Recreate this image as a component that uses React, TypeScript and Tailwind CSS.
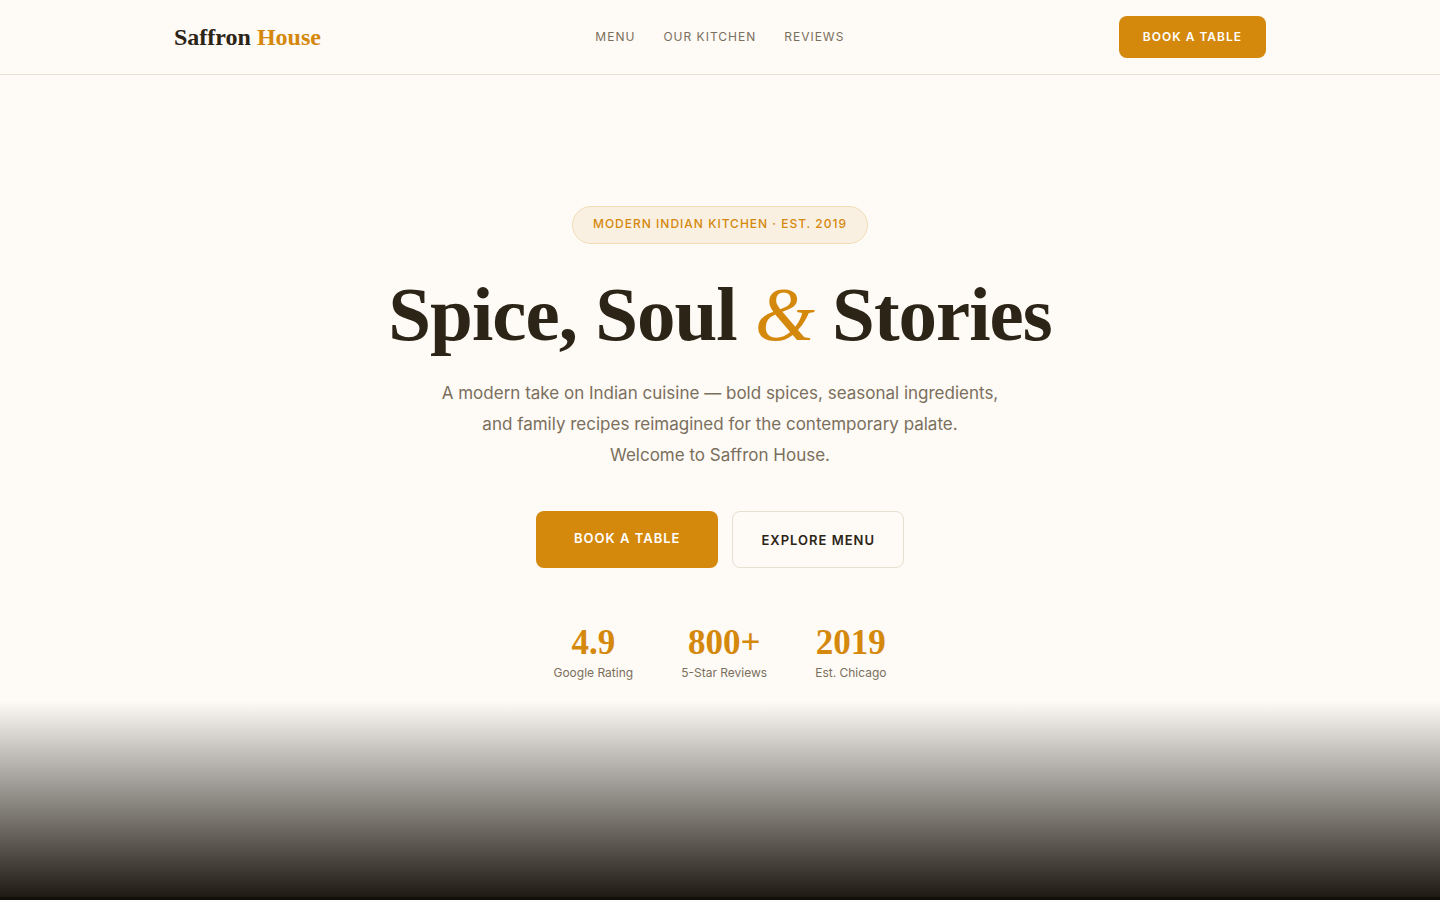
import React from "react";

type Stat = {
  value: string;
  label: string;
};

const navLinks = [
  { label: "Menu", href: "#menu" },
  { label: "Our Kitchen", href: "#kitchen" },
  { label: "Reviews", href: "#reviews" },
];

const stats: Stat[] = [
  { value: "4.9", label: "Google Rating" },
  { value: "800+", label: "5-Star Reviews" },
  { value: "2019", label: "Est. Chicago" },
];

const Header = () => (
  <header className="border-b border-[#e5e0d0]">
    <div className="mx-auto flex max-w-[1140px] items-center justify-between px-6 py-4">
      <a href="#top" className="font-['Liberation_Serif',serif] text-2xl leading-8 font-bold">
        Saffron <span className="text-[#d4880c]">House</span>
      </a>
      <nav className="flex gap-7 text-xs leading-5 tracking-[1px] text-[#7a6f5d] uppercase">
        {navLinks.map((link) => (
          <a key={link.href} href={link.href}>
            {link.label}
          </a>
        ))}
      </nav>
      <button
        type="button"
        className="rounded-lg bg-[#d4880c] px-6 py-[11px] text-xs leading-5 font-semibold tracking-[1px] text-white uppercase"
      >
        Book a Table
      </button>
    </div>
  </header>
);

const StatItem = ({ value, label }: Stat) => (
  <div className="text-center">
    <div className="font-['Liberation_Serif',serif] text-[35px] leading-10 font-bold text-[#d4880c]">{value}</div>
    <div className="text-xs leading-5 text-[#7a6f5d]">{label}</div>
  </div>
);

const Hero = () => (
  <section className="flex flex-col items-center px-6 pt-[131px] text-center">
    <div className="rounded-full border border-[#f1dcb5] bg-[#faf0e2] px-5 pt-2 pb-[10px] text-xs leading-[18px] font-medium tracking-[1px] text-[#d4880c] uppercase">
      Modern Indian Kitchen · Est. 2019
    </div>
    <h1 className="mt-7 font-['Liberation_Serif',serif] text-[77px] leading-[84px] font-bold tracking-[-1px]">
      Spice, Soul <em className="font-normal text-[#d4880c]">&amp;</em> Stories
    </h1>
    <p className="mt-[22px] max-w-[600px] text-[17px] leading-[31px] text-[#7a6f5d]">
      A modern take on Indian cuisine — bold spices, seasonal ingredients,
      <br />
      and family recipes reimagined for the contemporary palate.
      <br />
      Welcome to Saffron House.
    </p>
    <div className="mt-10 flex gap-[14px] text-[13px] leading-6 font-semibold">
      <button
        type="button"
        className="rounded-lg bg-[#d4880c] px-[38px] pt-[15px] pb-[18px] tracking-[1px] text-white uppercase"
      >
        Book a Table
      </button>
      <button type="button" className="rounded-lg border border-[#e5e0d0] px-7 py-[15px] tracking-[1px] uppercase">
        Explore Menu
      </button>
    </div>
    <div className="mt-[55px] flex gap-12">
      {stats.map((stat) => (
        <StatItem key={stat.label} {...stat} />
      ))}
    </div>
  </section>
);

const App = () => (
  <div id="top" className="min-h-screen bg-[#fefaf5] font-[Inter,sans-serif] text-[#2c2416]">
    <Header />
    <main>
      <Hero />
      <div className="mt-[18px] h-[196px] bg-linear-to-b from-transparent to-[#1f1b14]" />
      <div className="h-1 bg-[#120e0a]" />
    </main>
  </div>
);

export default App;
